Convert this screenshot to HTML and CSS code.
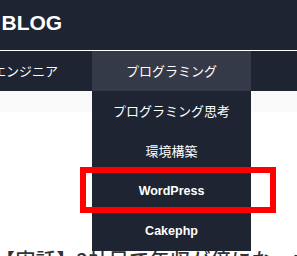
FILE: index.html
```html
<!DOCTYPE html>
<html lang="ja">
<head>
<meta charset="utf-8">
<link rel="stylesheet" href="styles.css">
</head>
<body>
<header class="site-header">
  <div class="brand">BLOG</div>
</header>
<nav class="global-nav">
  <ul class="nav-list">
    <li class="nav-item">エンジニア</li>
    <li class="nav-item is-active">プログラミング
      <ul class="dropdown">
        <li class="dropdown-item">プログラミング思考</li>
        <li class="dropdown-item">環境構築</li>
        <li class="dropdown-item is-latin">WordPress</li>
        <li class="dropdown-item is-latin">Cakephp</li>
      </ul>
      <div class="highlight"></div>
    </li>
  </ul>
</nav>
<main class="content">
  <div class="breadcrumb"></div>
  <h1 class="post-title">【実話】2社目で年収が倍になった</h1>
</main>
</body>
</html>
```
FILE: styles.css
```css
* { box-sizing: border-box; }
html, body { margin: 0; padding: 0; }
body {
  width: 297px;
  height: 256px;
  overflow: hidden;
  background: #ffffff;
  font-family: "Noto Sans CJK JP", "Liberation Sans", sans-serif;
}
.site-header {
  height: 50px;
  background: #1e2432;
  padding: 12px 0 0 1.5px;
}
.brand {
  font-family: "Liberation Sans", Arial, sans-serif;
  font-weight: bold;
  font-size: 21px;
  line-height: 21px;
  color: #ffffff;
}
.global-nav {
  border-top: 1px solid #ffffff;
  background: #1e2432;
  height: 41px;
}
.nav-list {
  list-style: none;
  margin: 0 0 0 -41px;
  padding: 0;
  display: flex;
  white-space: nowrap;
}
.nav-item {
  position: relative;
  padding: 0 34px;
  height: 40px;
  line-height: 40px;
  font-size: 13px;
  color: #ffffff;
}
.nav-item.is-active {
  background: #353a48;
  width: 159px;
  text-align: center;
  padding: 0;
}
.dropdown {
  position: absolute;
  top: 40px;
  left: 0;
  width: 159px;
  margin: 0;
  padding: 0;
  list-style: none;
  background: #1e2432;
  z-index: 2;
}
.dropdown-item {
  height: 40px;
  line-height: 40px;
  text-align: center;
  font-size: 13px;
  color: #ffffff;
}
.dropdown-item.is-latin {
  font-family: "Liberation Sans", Arial, sans-serif;
  font-weight: bold;
  font-size: 12.5px;
}
.highlight {
  position: absolute;
  left: -12px;
  top: 116px;
  width: 196px;
  height: 46px;
  border: 6px solid #ff0000;
  z-index: 3;
}
.content {
  display: flex;
  flex-direction: column;
}
.breadcrumb {
  height: 21px;
  background: #f9f9f9;
}
.post-title {
  margin: 133px 0 0 -5px;
  font-size: 20px;
  font-weight: 500;
  letter-spacing: 0.4px;
  line-height: 30px;
  color: #333333;
  white-space: nowrap;
}
```
